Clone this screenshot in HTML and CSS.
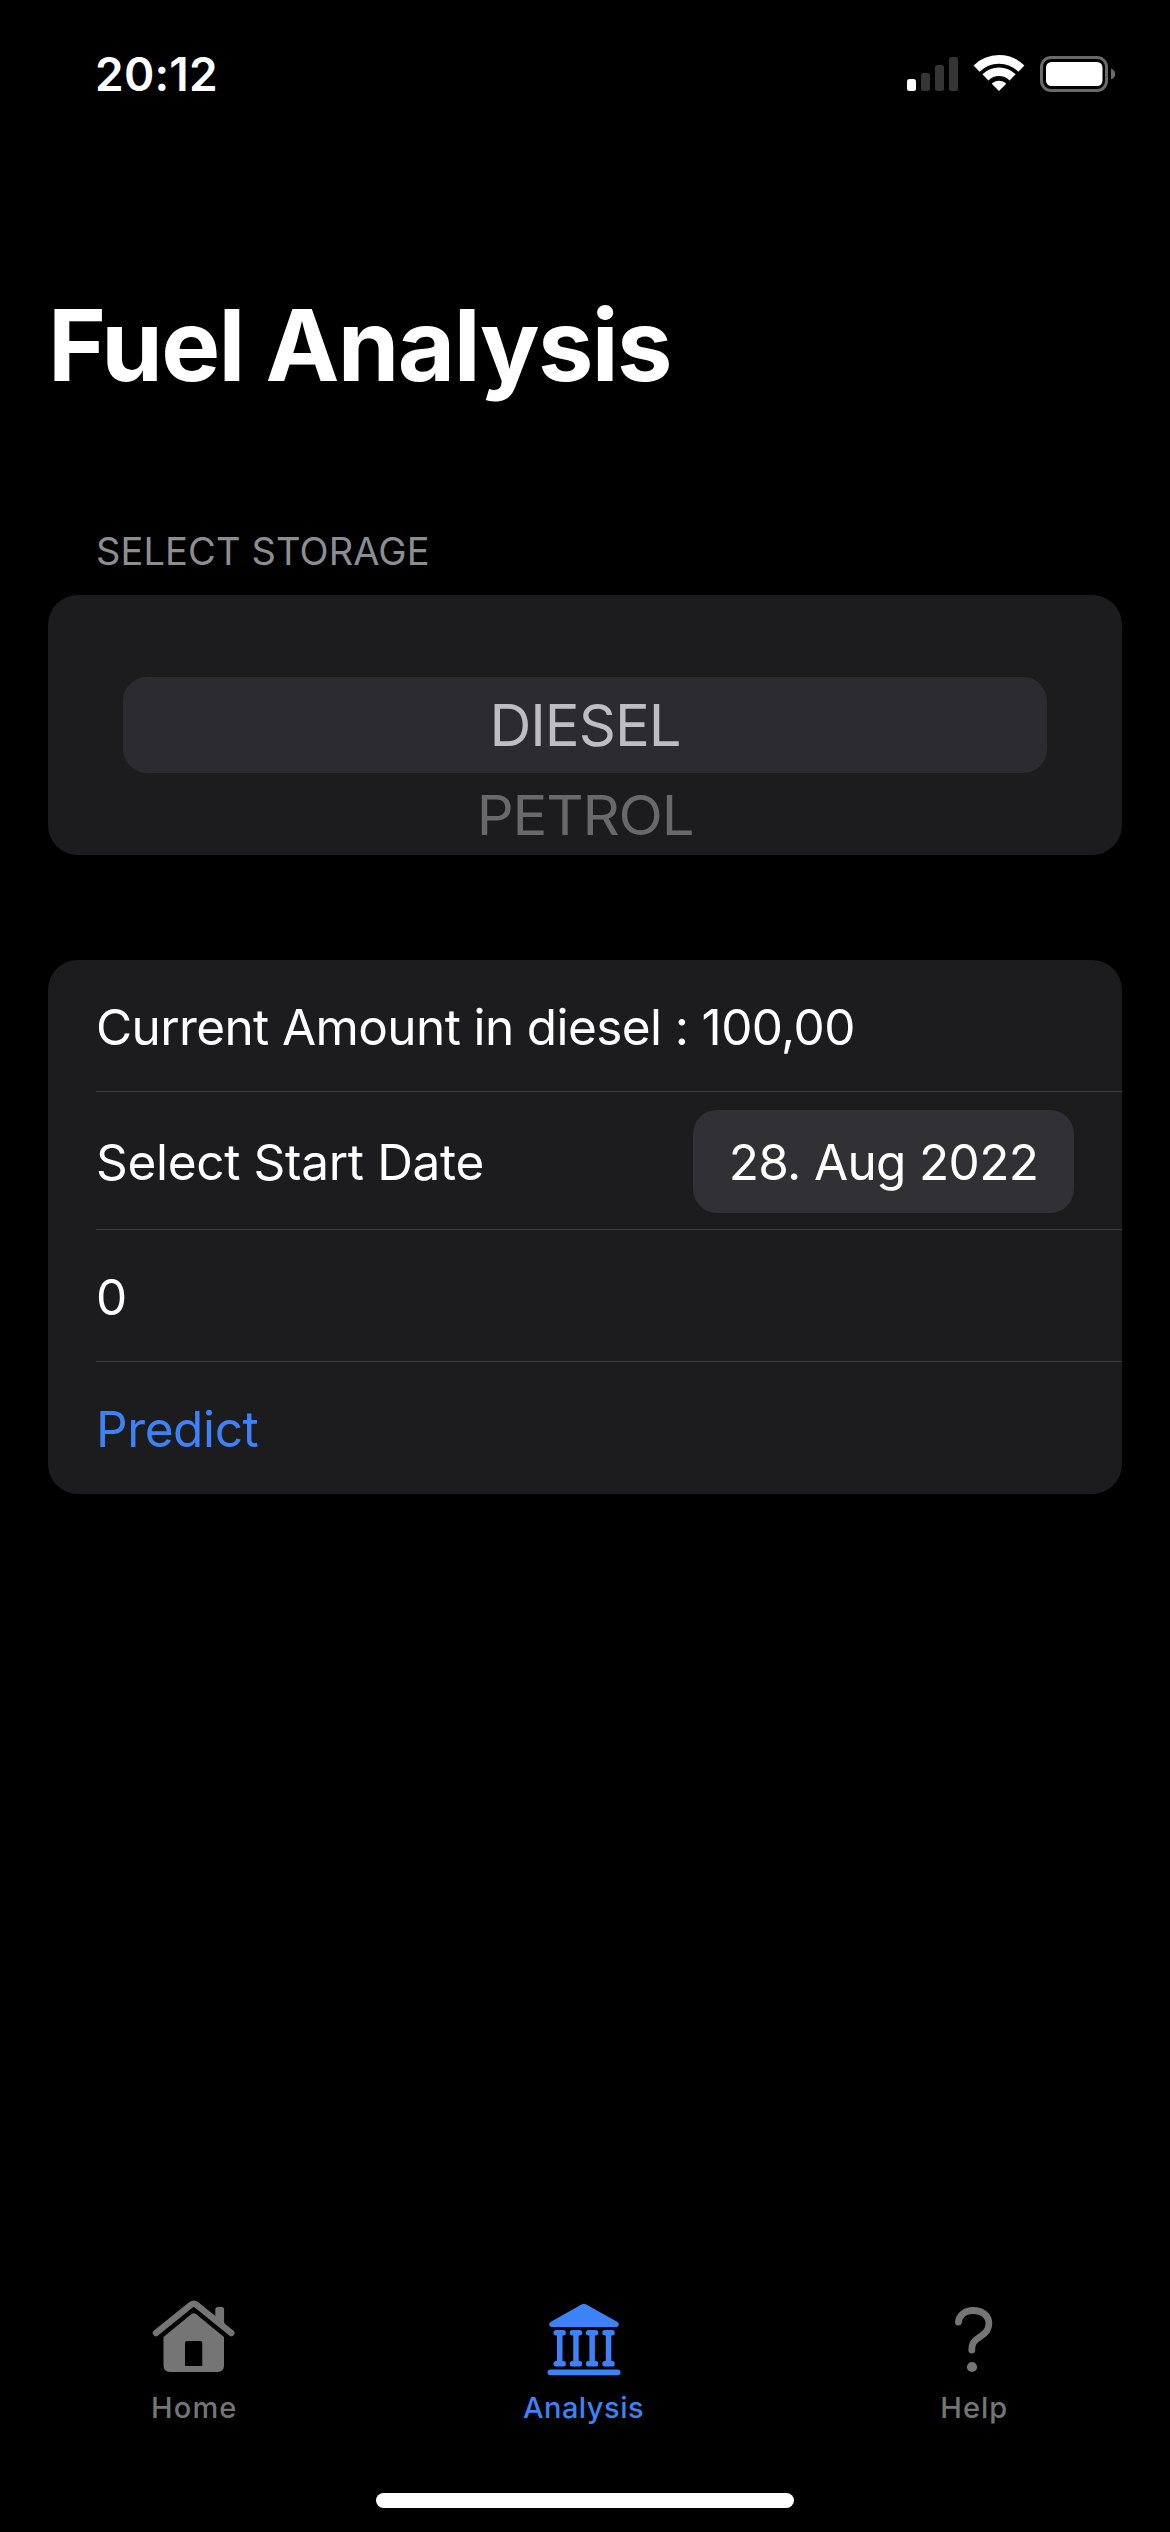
FILE: index.html
```html
<!DOCTYPE html>
<html lang="en">
<head>
<meta charset="utf-8">
<title>Fuel Analysis</title>
<link rel="stylesheet" href="styles.css">
</head>
<body>
<header class="status-bar">
  <span class="clock">20:12</span>
  <svg class="status-icons" width="212" height="40" viewBox="906 54 212 40">
    <rect x="907" y="79" width="9" height="12" rx="2.5" fill="#fff"/>
    <g fill="#353535">
      <rect x="921" y="73" width="9" height="18" rx="2.5"/>
      <rect x="935" y="65" width="9" height="26" rx="2.5"/>
      <rect x="949" y="57" width="9" height="34" rx="2.5"/>
    </g>
    <g fill="none" stroke="#fff" stroke-width="8.6">
      <path d="M976.6 68.6A31.7 31.7 0 0 1 1021.4 68.6"/>
      <path d="M985.4 77.4A19.2 19.2 0 0 1 1012.6 77.4"/>
    </g>
    <path d="M999 91L992 84Q991.8 83.4 992.4 83A10.5 10.5 0 0 1 1005.6 83Q1006.2 83.4 1006 84Z" fill="#fff"/>
    <rect x="1041.5" y="57.5" width="65" height="33" rx="9.5" fill="none" stroke="#6a6a6a" stroke-width="3"/>
    <rect x="1046" y="62" width="56.5" height="24" rx="5.5" fill="#fff"/>
    <path d="M1111 68.5Q1115.2 70 1115.2 74T1111 79.5Z" fill="#6a6a6a"/>
  </svg>
</header>
<main class="content">
  <h1 class="title">Fuel Analysis</h1>
  <h2 class="section-label">SELECT STORAGE</h2>
  <section class="card picker">
    <div class="option selected">DIESEL</div>
    <div class="option next">PETROL</div>
  </section>
  <section class="card form">
    <div class="row amount">Current Amount in diesel : 100,00</div>
    <div class="row date-row"><span>Select Start Date</span><span class="date-pill">28. Aug 2022</span></div>
    <div class="row value">0</div>
    <div class="row action"><a>Predict</a></div>
  </section>
</main>
<nav class="tab-bar">
  <a class="tab home">
    <svg width="90" height="80" viewBox="149 2298 90 80" fill="currentColor">
      <path d="M156 2333L191.3 2304.6Q193.7 2302.8 196.1 2304.6L231.3 2333" fill="none" stroke="currentColor" stroke-width="6.4" stroke-linecap="round"/>
      <path d="M215.3 2319V2309.5Q215.3 2307 217.8 2307H221.6Q224.1 2307 224.1 2309.5V2327Z"/>
      <path fill-rule="evenodd" d="M163.5 2337L191.5 2314Q193.7 2312.4 195.9 2314L224 2337V2365.5Q224 2372 217.5 2372H170Q163.5 2372 163.5 2365.5ZM187 2341Q185 2341 185 2343V2366H202.3V2343Q202.3 2341 200.3 2341Z"/>
    </svg>
    <span>Home</span>
  </a>
  <a class="tab analysis active">
    <svg width="90" height="80" viewBox="538.5 2298 90 80" fill="currentColor">
      <path d="M581 2304.4Q583.4 2303 585.8 2304.4L616.6 2321.8Q618.4 2323 618.4 2324.6Q618.2 2327 615.8 2327H551Q548.8 2327 548.6 2324.6Q548.6 2323 550.4 2321.8Z"/>
      <g id="column">
        <rect x="553" y="2330" width="12.4" height="5.4" rx="2.5"/>
        <rect x="556.5" y="2332" width="5.5" height="32"/>
        <rect x="553" y="2361" width="12.4" height="5.4" rx="2.5"/>
      </g>
      <use href="#column" x="16.2"/>
      <use href="#column" x="32.4"/>
      <use href="#column" x="48.8"/>
      <rect x="547" y="2369.4" width="73" height="5.8" rx="2.9"/>
    </svg>
    <span>Analysis</span>
  </a>
  <a class="tab help">
    <svg width="90" height="80" viewBox="929 2298 90 80" fill="currentColor">
      <path d="M958.4 2322.2C959.3 2315 965 2310.5 973 2310.5C982.5 2310.5 988.9 2315.8 988.9 2323.6C988.9 2330 985.8 2333.4 979.6 2337.2C973.6 2340.8 971.9 2343.6 971.8 2350" fill="none" stroke="currentColor" stroke-width="6.8" stroke-linecap="round"/>
      <circle cx="972" cy="2367" r="5.1"/>
    </svg>
    <span>Help</span>
  </a>
</nav>
<div class="home-indicator"></div>
</body>
</html>
```
FILE: styles.css
```css
* { box-sizing: border-box; }
body {
  margin: 0;
  width: 1170px;
  height: 2532px;
  display: flex;
  flex-direction: column;
  background: #000;
  color: #fff;
  font-family: Inter, "Liberation Sans", sans-serif;
  overflow: hidden;
}
.status-bar {
  height: 148px;
  padding: 0 52px 0 95px;
  display: flex;
  align-items: center;
  justify-content: space-between;
}
.clock { font-size: 46px; font-weight: 600; letter-spacing: 0.22px; white-space: nowrap; }
.content { flex: 1; padding: 137px 48px 0; }
.title { margin: 0; font-size: 99px; line-height: 120px; font-weight: 700; letter-spacing: -1.62px; white-space: nowrap; }
.section-label {
  margin: 0;
  padding: 122px 0 20px 48px;
  font-size: 38px;
  line-height: 48px;
  font-weight: 400;
  letter-spacing: 0.13px;
  color: #8d8d93;
}
.card { background: #1c1c1e; border-radius: 30px; overflow: hidden; }
.picker { height: 260px; padding: 82px 75px 0; }
.option { display: flex; align-items: center; justify-content: center; font-size: 58px; }
.selected { height: 96px; border-radius: 24px; background: #2c2c30; color: #bebec2; letter-spacing: -1px; }
/* the wheel curves away below the selection, so its rows are foreshortened */
.next { height: 84px; color: #69696b; letter-spacing: -1.2px; transform: scaleY(0.94); }
.form { margin-top: 105px; padding-left: 48px; font-size: 49.5px; }
.row {
  height: 132px;
  padding-top: 2px;
  display: flex;
  align-items: center;
  justify-content: space-between;
  white-space: nowrap;
}
.row + .row { border-top: 1px solid #3d3d41; }
.amount { height: 131px; letter-spacing: -0.61px; }
.date-row { height: 138px; padding-right: 48px; letter-spacing: -0.32px; }
.date-pill {
  width: 381px;
  height: 103px;
  display: flex;
  align-items: center;
  justify-content: center;
  border-radius: 24px;
  background: #313135;
  letter-spacing: -0.65px;
}
.action { height: 133px; color: #3e82f7; letter-spacing: -0.39px; }
.tab-bar { height: 180px; display: grid; grid-template-columns: 388.5px 390px 391.5px; margin-bottom: 15px; }
.tab {
  display: flex;
  flex-direction: column;
  align-items: center;
  color: #757575;
  font-size: 29px;
  line-height: 59px;
  font-weight: 500;
}
.home { letter-spacing: 1.2px; }
.analysis { letter-spacing: 0.5px; }
.help { letter-spacing: 1px; }
.active { color: #3e82f7; }
.home-indicator { width: 418px; height: 15px; margin: 0 auto 24px; border-radius: 8px; background: #fff; flex: none; }
```
